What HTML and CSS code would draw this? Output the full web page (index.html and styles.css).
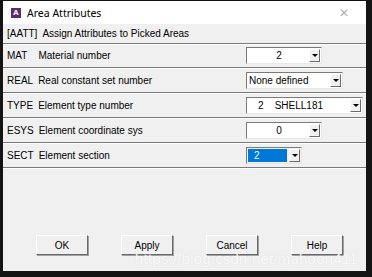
FILE: index.html
```html
<!DOCTYPE html>
<html lang="en">
<head>
    <meta charset="UTF-8">
    <title>Area Attributes</title>
    <link rel="stylesheet" href="styles.css">
</head>
<body>
    <div class="dialog">
        <div class="titlebar">
            <span class="app-icon">A</span>
            <span class="title">Area Attributes</span>
            <span class="close">&#x2715;</span>
        </div>
        <div class="subtitle">[AATT]&nbsp; Assign Attributes to Picked Areas</div>

        <div class="rows">
            <div class="row">
                <div class="label"><span class="code mat">MAT</span>Material number</div>
                <div class="combo w76 center"><span class="value">2</span><span class="arrow"></span></div>
            </div>
            <div class="row">
                <div class="label"><span class="code">REAL</span>Real constant set number</div>
                <div class="combo w97"><span class="value">None defined</span><span class="arrow"></span></div>
            </div>
            <div class="row">
                <div class="label"><span class="code">TYPE</span>Element type number</div>
                <div class="combo w116"><span class="value indent">2&nbsp;&nbsp;&nbsp; SHELL181</span><span class="arrow"></span></div>
            </div>
            <div class="row">
                <div class="label"><span class="code">ESYS</span>Element coordinate sys</div>
                <div class="combo w76 center"><span class="value">0</span><span class="arrow"></span></div>
            </div>
            <div class="row">
                <div class="label"><span class="code">SECT</span>Element section</div>
                <div class="combo w55 selected"><span class="value">2</span><span class="arrow"></span></div>
            </div>
        </div>

        <div class="buttons">
            <button class="btn">OK</button>
            <button class="btn">Apply</button>
            <button class="btn">Cancel</button>
            <button class="btn">Help</button>
        </div>
        <div class="watermark">https://blog.csdn.net/mahoon411</div>
    </div>
</body>
</html>
```

FILE: styles.css
```css
body {
    margin: 0;
    padding: 0;
    background: #141414;
    font-family: 'Liberation Sans', Arial, sans-serif;
    font-size: 10px;
    color: #000;
    width: 372px;
    height: 277px;
    overflow: hidden;
}
.dialog {
    position: relative;
    margin: 1px 0 0 3px;
    width: 363px;
    height: 270px;
    background: #f0f0f0;
    display: flex;
    flex-direction: column;
}
.titlebar {
    height: 23px;
    background: #fff;
    display: flex;
    align-items: center;
    padding-left: 8px;
}
.app-icon {
    width: 10px;
    height: 10px;
    background: #5a2c6e;
    color: #fff;
    font-size: 8px;
    font-weight: bold;
    line-height: 10px;
    text-align: center;
    margin-right: 6px;
}
.title {
    font-family: 'Noto Sans', sans-serif;
    font-size: 10.5px;
    flex: 1;
}
.close {
    color: #b0b0b0;
    font-size: 12px;
    margin-right: 17px;
}
.subtitle {
    height: 19px;
    line-height: 19px;
    padding-left: 4px;
    border-bottom: 1px solid #7a7a7a;
    box-shadow: 0 1px 0 #fff;
}
.row {
    height: 23px;
    display: flex;
    align-items: center;
    border-bottom: 1px solid #7a7a7a;
    box-shadow: 0 1px 0 #fff;
    margin-bottom: 1px;
}
.label {
    width: 243px;
    padding-left: 4px;
    box-sizing: border-box;
}
.code {
    margin-right: 5px;
}
.code.mat {
    margin-right: 11px;
}
.combo {
    height: 17px;
    box-sizing: border-box;
    background: #fff;
    border: 1px solid;
    border-color: #7a7a7a #e8e8e8 #e8e8e8 #7a7a7a;
    display: flex;
    align-items: center;
    padding: 1px;
}
.w76 { width: 76px; }
.w97 { width: 97px; }
.w116 { width: 117px; }
.w55 { width: 56px; }
.value {
    flex: 1;
    padding-left: 1px;
}
.center .value {
    text-align: center;
}
.indent {
    padding-left: 10px;
}
.arrow {
    width: 11px;
    height: 13px;
    box-sizing: border-box;
    background: #f0f0f0;
    border: 1px solid;
    border-color: #fff #696969 #696969 #fff;
    position: relative;
}
.arrow::after {
    content: '';
    position: absolute;
    left: 2px;
    top: 4px;
    border-left: 3px solid transparent;
    border-right: 3px solid transparent;
    border-top: 3px solid #000;
}
.selected {
    background: #f0f0f0;
}
.selected .value {
    background: #0078d7;
    color: #fff;
    height: 13px;
    line-height: 13px;
    padding-left: 6px;
    margin-right: 2px;
}
.buttons {
    margin-top: auto;
    margin-bottom: 16px;
    display: flex;
    gap: 33px;
    padding-left: 33px;
}
.btn {
    width: 52px;
    height: 20px;
    padding: 0;
    font-family: 'Liberation Sans', Arial, sans-serif;
    font-size: 10px;
    background: #f0f0f0;
    border: 1px solid;
    border-color: #fff #696969 #696969 #fff;
    box-shadow: 1px 1px 0 #a0a0a0;
}
.watermark {
    position: absolute;
    left: 132px;
    top: 249px;
    font-family: 'Liberation Sans', Arial, sans-serif;
    font-size: 15px;
    color: rgba(255, 255, 255, 0.85);
    letter-spacing: 0.2px;
    white-space: nowrap;
    text-shadow: 0 0 1px rgba(200, 200, 200, 0.6);
}
```
